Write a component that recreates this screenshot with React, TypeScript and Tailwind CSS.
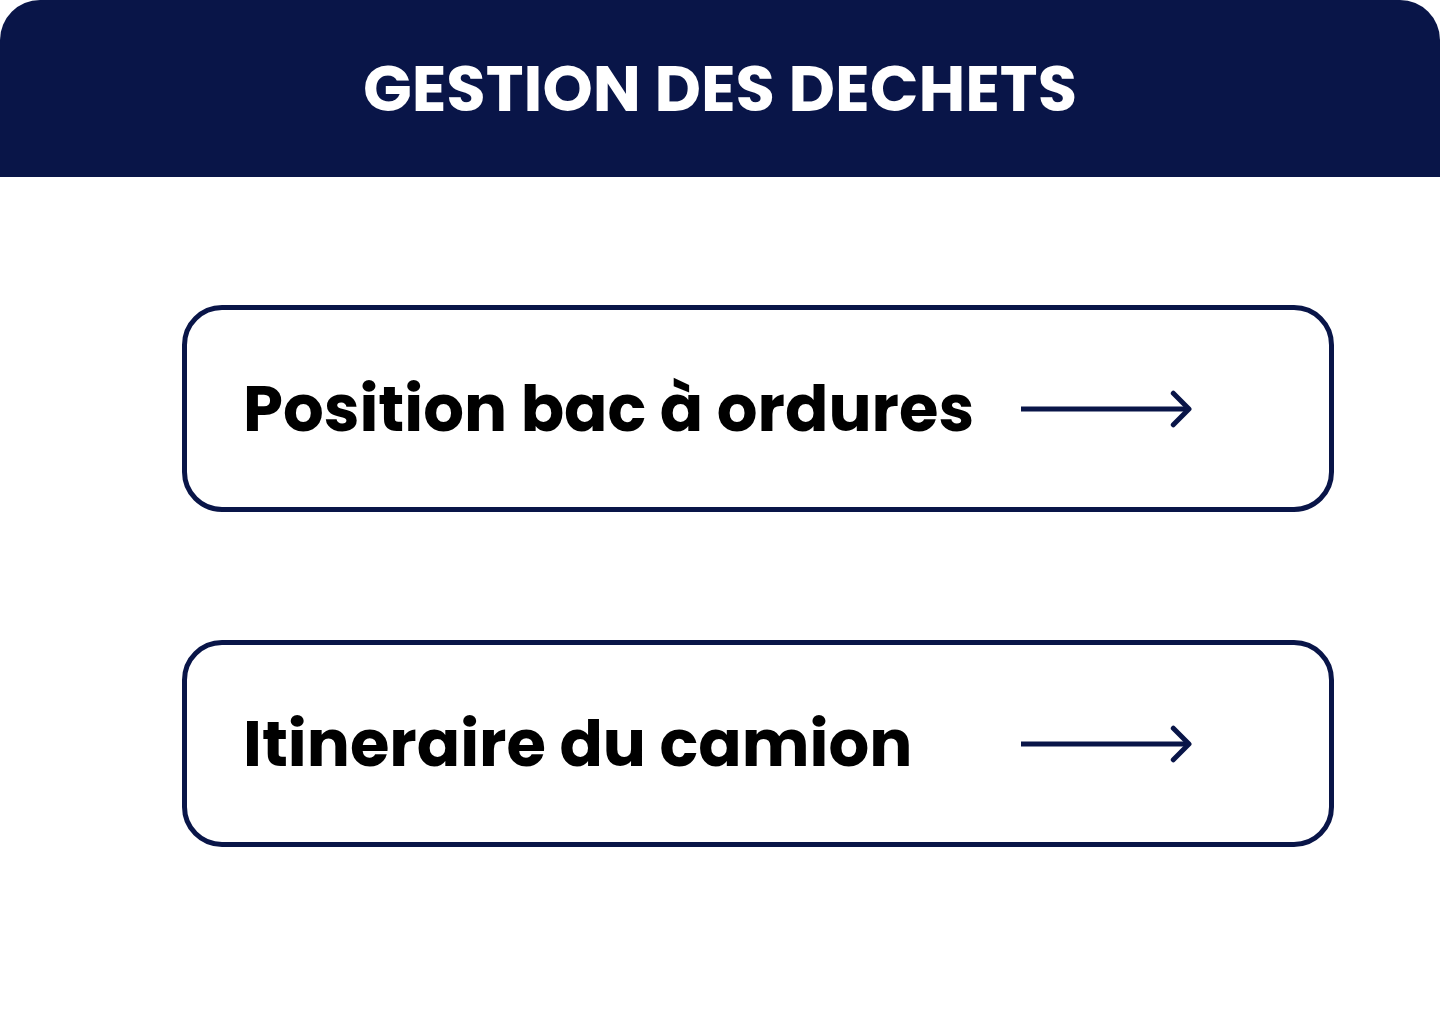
const items = ["Position bac à ordures", "Itineraire du camion"];

function LongArrow() {
  return (
    <svg className="h-10 w-[171px] shrink-0" viewBox="0 0 171 40" fill="none" stroke="#091548" strokeWidth="5" aria-hidden="true">
      <path d="M0 20H168" />
      <path d="M152.3 4.2L168 20L152.3 35.8" strokeLinecap="round" strokeLinejoin="round" />
    </svg>
  );
}

export default function App() {
  return (
    <div className="min-h-screen bg-white font-['Poppins','Inter',sans-serif]">
      <header className="flex items-center justify-center rounded-t-[40px] bg-[#091548] py-10">
        <h1 className="text-[64px] leading-[97px] font-bold whitespace-nowrap text-white">GESTION DES DECHETS</h1>
      </header>
      <main className="flex flex-col gap-32 pt-32 pr-[106px] pl-[182px]">
        {items.map((label) => (
          <button
            key={label}
            type="button"
            className="flex w-full items-center justify-between rounded-[40px] border-[5px] border-[#091548] bg-white py-[50px] pr-[137px] pl-14 text-left"
          >
            <span className="text-[64px] leading-[97px] font-bold whitespace-nowrap text-black">{label}</span>
            <LongArrow />
          </button>
        ))}
      </main>
    </div>
  );
}
